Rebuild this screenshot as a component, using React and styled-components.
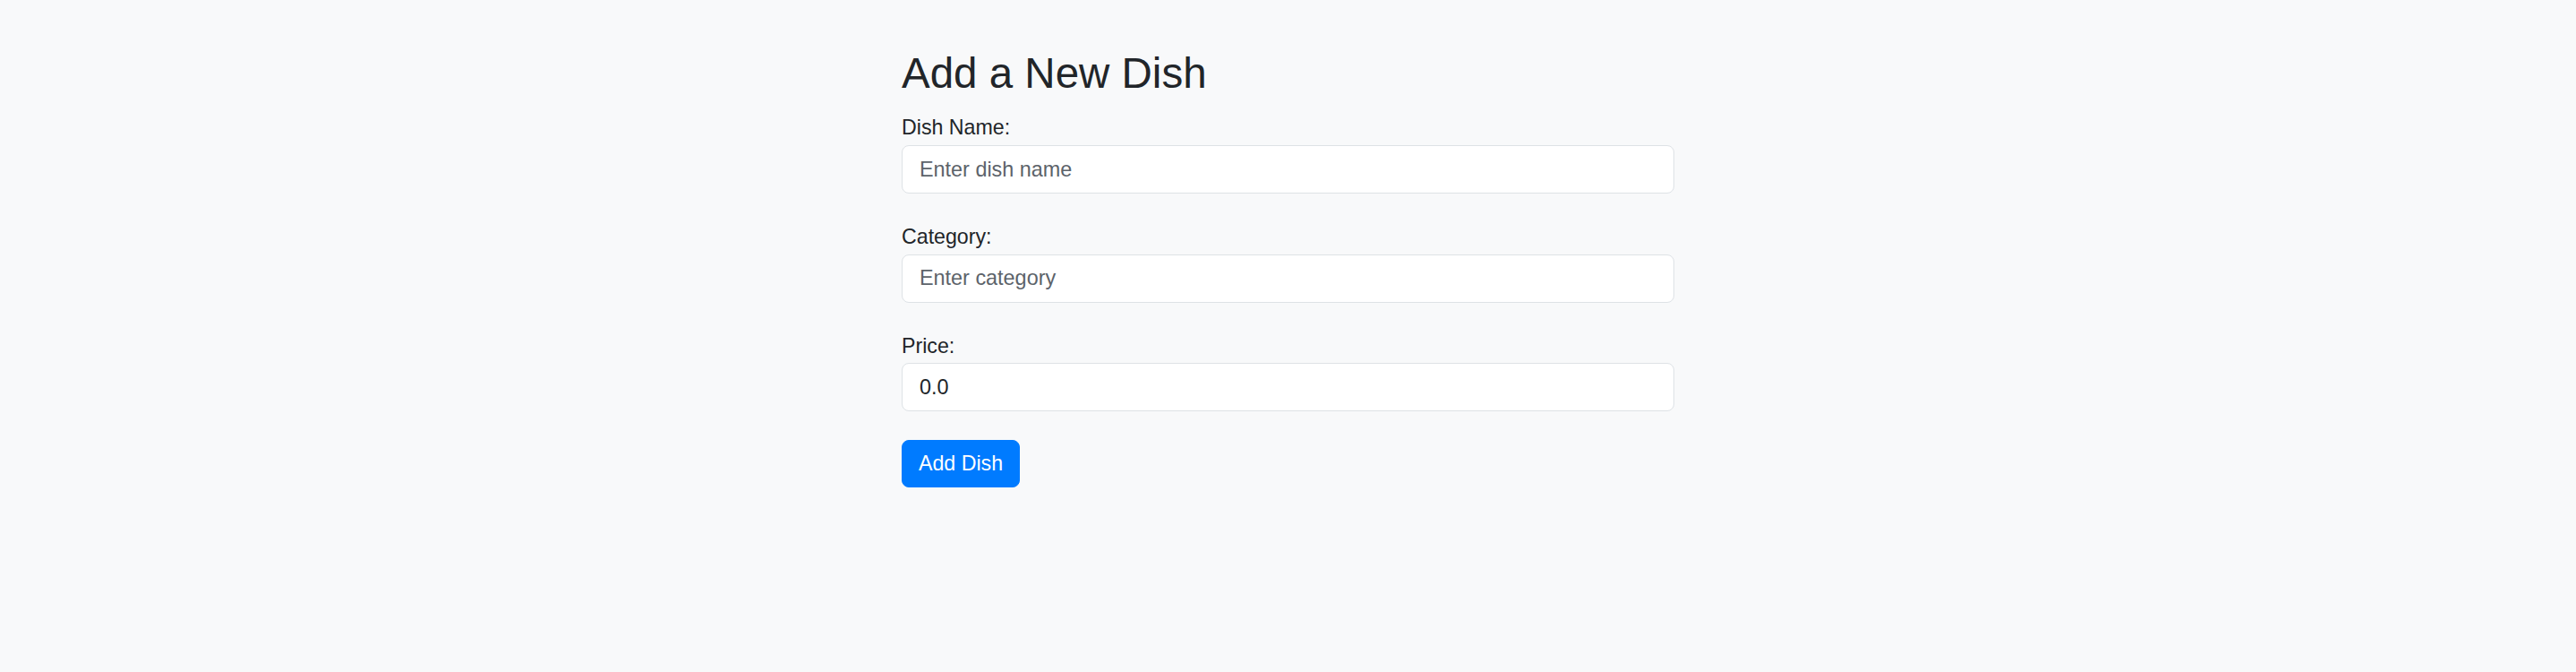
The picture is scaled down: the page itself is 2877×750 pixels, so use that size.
import React, { useState } from "react";
import styled, { createGlobalStyle } from "styled-components";

const GlobalStyle = createGlobalStyle`
  html, body {
    margin: 0;
    padding: 0;
    background: #f8f9fa;
    color: #212529;
    font-family: "Liberation Sans", Arial, sans-serif;
  }
  * {
    box-sizing: border-box;
  }
`;

const Page = styled.div`
  min-height: 750px;
  background: #f8f9fa;
`;

const Container = styled.div`
  width: 863px;
  margin: 0 auto;
  padding-top: 54px;
`;

const Title = styled.h2`
  margin: 0 0 16px;
  font-size: 47.5px;
  font-weight: 400;
  line-height: 56.4px;
  color: #212529;
`;

const Group = styled.div`
  margin-bottom: 32px;
`;

const Label = styled.label`
  display: block;
  margin-bottom: 2px;
  font-size: 23.2px;
  line-height: 33.6px;
  color: #212529;
`;

const Input = styled.input`
  display: block;
  width: 100%;
  height: 54px;
  padding: 0 19px;
  font-family: inherit;
  font-size: 23.4px;
  color: #212529;
  background: #ffffff;
  border: 1px solid #dee2e6;
  border-radius: 8px;
  outline: none;

  &::placeholder {
    color: #5c636a;
  }
`;

const SubmitButton = styled.button`
  height: 53px;
  padding: 0 18px;
  font-family: inherit;
  font-size: 23.2px;
  color: #ffffff;
  background: #007bff;
  border: 1px solid #007bff;
  border-radius: 8px;
  cursor: pointer;
`;

const App = () => {
  const [name, setName] = useState("");
  const [category, setCategory] = useState("");
  const [price, setPrice] = useState("0.0");

  return (
    <Page>
      <GlobalStyle />
      <Container>
        <Title>Add a New Dish</Title>
        <form onSubmit={(e) => e.preventDefault()}>
          <Group>
            <Label htmlFor="dish-name">Dish Name:</Label>
            <Input
              id="dish-name"
              placeholder="Enter dish name"
              value={name}
              onChange={(e) => setName(e.target.value)}
            />
          </Group>
          <Group>
            <Label htmlFor="category">Category:</Label>
            <Input
              id="category"
              placeholder="Enter category"
              value={category}
              onChange={(e) => setCategory(e.target.value)}
            />
          </Group>
          <Group>
            <Label htmlFor="price">Price:</Label>
            <Input
              id="price"
              value={price}
              onChange={(e) => setPrice(e.target.value)}
            />
          </Group>
          <SubmitButton type="submit">Add Dish</SubmitButton>
        </form>
      </Container>
    </Page>
  );
};

export default App;
